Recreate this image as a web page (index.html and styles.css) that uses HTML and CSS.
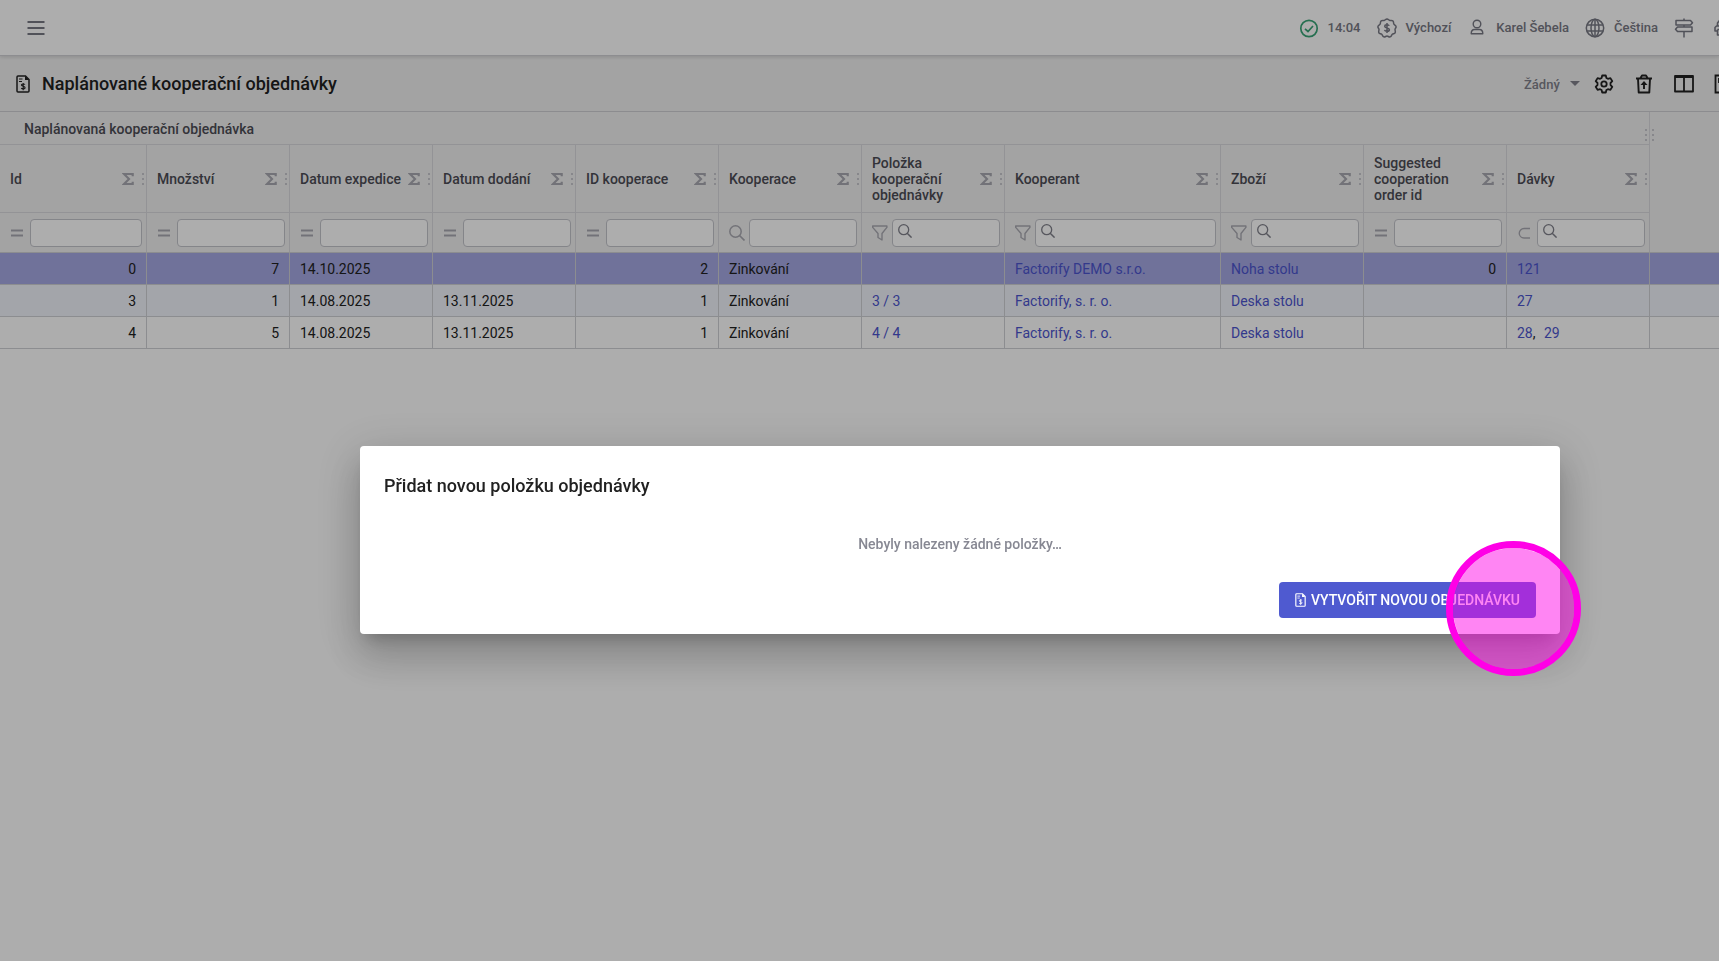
FILE: index.html
```html
<!DOCTYPE html>
<html lang="cs">
<head>
    <meta charset="UTF-8">
    <meta name="viewport" content="width=device-width, initial-scale=1.0">
    <title>Naplánované kooperační objednávky</title>
    <link rel="stylesheet" href="styles.css">
</head>
<body>

    <!-- Ikony -->
    <svg class="sprite" aria-hidden="true">
        <symbol id="i-sigma" viewBox="0 0 12 14"><path d="M10.700 4.200V2H2L7 7l-5 5h8.700V9.800" fill="none" stroke="currentColor" stroke-width="2.200"/></symbol>
        <symbol id="i-dots" viewBox="0 0 2 12"><path d="M0 0h2v2H0zM0 5h2v2H0zM0 10h2v2H0z" fill="currentColor"/></symbol>
        <symbol id="i-equal" viewBox="0 0 16 16"><path d="M1 5.500h12M1 10.500h12" fill="none" stroke="currentColor" stroke-width="2"/></symbol>
        <symbol id="i-search" viewBox="0 0 16 16"><circle cx="6.500" cy="6.500" r="5.700" fill="none" stroke="currentColor" stroke-width="1.500"/><path d="M10.500 10.500l5 5" stroke="currentColor" stroke-width="1.700"/></symbol>
        <symbol id="i-funnel" viewBox="0 0 16 16"><path d="M.7 1h14.200v1.400L10 8.500V15l-4-2.500v-4L.7 2.400z" fill="none" stroke="currentColor" stroke-width="1.400" stroke-linejoin="round"/></symbol>
        <symbol id="i-subset" viewBox="0 0 16 16"><path d="M13 3.500H7a4.700 4.700 0 0 0 0 9.500h6" fill="none" stroke="currentColor" stroke-width="1.400"/></symbol>
        <symbol id="i-order" viewBox="0 0 14 18"><path d="M2 1h7.500L13 4.500V16a1 1 0 0 1-1 1H2a1 1 0 0 1-1-1V2a1 1 0 0 1 1-1z" fill="none" stroke="currentColor" stroke-width="1.500"/><path d="M9 1v4h4z" fill="currentColor"/><path d="M3 4h3.500M3 6.500h3M9 9.500c-.5-.7-3.600-.9-3.600.6 0 1.600 3.700.8 3.700 2.600 0 1.500-3.100 1.400-3.900.5M7.200 8v7.200" fill="none" stroke="currentColor" stroke-width="1.100"/></symbol>
    </svg>

    <div class="app">
        <!-- Horní lišta -->
        <header class="topbar">
            <button class="icon-button" aria-label="Menu">
                <svg width="18" height="16" viewBox="0 0 18 16"><path d="M.5 2h17M.5 8h17M.5 14h17" stroke="currentColor" stroke-width="2"/></svg>
            </button>
            <div class="status">
                <span class="status-item">
                    <svg class="ok" width="20" height="20" viewBox="0 0 20 20"><g fill="none" stroke="currentColor" stroke-width="1.700"><circle cx="10" cy="10.500" r="8.200"/><path d="M6 10.800l3 2.700 5-5.500"/></g></svg>
                    14:04
                </span>
                <span class="status-item">
                    <svg width="20" height="20" viewBox="0 0 20 20"><g fill="none" stroke="currentColor" stroke-width="1.500"><path d="M10 1c1.400 0 1.700 1.300 2.800 1.500s2.300-.4 3.200.6.300 2.100.9 3.100 2.100 1.200 2.200 2.500-1.100 1.700-1.100 2.800.8 2.200.1 3.300-2 .7-2.800 1.500-.8 2.200-2.100 2.600S11.100 18 10 18s-2 1.300-3.200.9-1.300-1.800-2.100-2.600-2.200-.4-2.800-1.500.1-2.200.1-3.300S.8 10 .9 8.700s1.600-1.500 2.200-2.500 0-2.100.9-3.100 2.100-.4 3.200-.6S8.600 1 10 1z"/><path d="M12.200 7.800c-.6-1.500-4.500-1.500-4.500.4 0 2.300 4.700 1.100 4.700 3.500 0 2.100-4.400 2-4.900.2M10 5v10"/></g></svg>
                    Výchozí
                </span>
                <span class="status-item">
                    <svg width="20" height="20" viewBox="0 0 20 20"><g fill="none" stroke="currentColor" stroke-width="1.400"><circle cx="10" cy="6" r="3.800"/><path d="M4.200 15.800c0-3 1.300-4.300 3.300-4.300h5c2 0 3.300 1.300 3.300 4.300z" stroke-linejoin="round"/></g></svg>
                    Karel Šebela
                </span>
                <span class="status-item">
                    <svg width="20" height="20" viewBox="0 0 20 20"><g fill="none" stroke="currentColor" stroke-width="1.500"><circle cx="10" cy="10" r="8.700"/><ellipse cx="10" cy="10" rx="4" ry="8.700"/><path d="M10 1.300v17.400M2 7h16M2 13h16"/></g></svg>
                    Čeština
                </span>
                <svg width="20" height="20" viewBox="0 0 20 20"><g fill="none" stroke="currentColor" stroke-width="1.500" stroke-linejoin="round"><path d="M10 .5v2M10 7v2M10 13.500v6M2 2.500h14.500l2 2.200-2 2.300H2zM18 9H3.500l-2 2.200 2 2.300H18z"/></g></svg>
                <svg width="20" height="20" viewBox="0 0 20 20"><g fill="none" stroke="currentColor" stroke-width="1.600" stroke-linejoin="round"><path d="M7.500 8V5l2-2.500H18M7.500 13H5V9.500L6.500 8H20M7.500 11.500H20M7.500 11.500V17H20"/></g></svg>
            </div>
        </header>

        <!-- Nadpis stránky a nástroje -->
        <div class="toolbar">
            <svg width="14" height="18"><use href="#i-order"/></svg>
            <h1>Naplánované kooperační objednávky</h1>
            <div class="view-select">
                <select aria-label="Pohled"><option>Žádný</option></select>
                <svg width="10" height="5" viewBox="0 0 10 5"><path d="M0 0h10L5 5z" fill="currentColor"/></svg>
            </div>
            <div class="tools">
                <button class="icon-button" aria-label="Nastavení">
                    <svg width="20" height="20" viewBox="0 0 20 20"><g fill="none" stroke="currentColor" stroke-width="1.800" stroke-linejoin="round"><path d="M8.200 1.500h3.600l.6 2.500 1.500.8 2.500-.7 1.900 3.100L16.500 9v2l1.800 1.800-1.900 3.100-2.500-.7-1.500.8-.6 2.500H8.200L7.600 16l-1.500-.8-2.500.7-1.900-3.100L3.500 11V9L1.700 7.200l1.900-3.100 2.500.7L7.600 4z"/><circle cx="10" cy="10" r="2.700"/></g></svg>
                </button>
                <button class="icon-button" aria-label="Obnovit smazané">
                    <svg width="20" height="20" viewBox="0 0 20 20"><g fill="none" stroke="currentColor" stroke-width="1.900" stroke-linejoin="round"><path d="M2 4.500h16M6.500 4l1.500-2.500h4L13.500 4M4 4.500l.7 14h10.600l.7-14M10 15V9"/></g><path d="M6.500 11L10 7l3.500 4z" fill="currentColor"/></svg>
                </button>
                <button class="icon-button" aria-label="Sloupce">
                    <svg width="20" height="20" viewBox="0 0 20 20"><path d="M1 2h18v15.500H1zM10 2v15.500M1 3h18" fill="none" stroke="currentColor" stroke-width="1.800" stroke-linejoin="round"/></svg>
                </button>
                <button class="icon-button" aria-label="Export">
                    <svg width="20" height="20" viewBox="0 0 20 20"><path d="M1.500 1.500h17v17h-17zM5 4v4h8V4" fill="none" stroke="currentColor" stroke-width="1.800"/></svg>
                </button>
            </div>
        </div>

        <!-- Tabulka objednávek -->
        <table class="grid">
            <colgroup>
                <col class="col-id">
                <col class="col" span="6">
                <col class="col-wide">
                <col class="col" span="3">
                <col>
            </colgroup>
            <thead>
                <tr class="group-row">
                    <th colspan="11">
                        Naplánovaná kooperační objednávka
                        <span class="group-handle"><svg width="2" height="12"><use href="#i-dots"/></svg><svg width="2" height="12"><use href="#i-dots"/></svg></span>
                    </th>
                    <td class="filler" rowspan="3"></td>
                </tr>
                <tr class="head-row">
                    <th><div class="head"><span>Id</span><svg width="12" height="14"><use href="#i-sigma"/></svg><svg class="handle" width="2" height="12"><use href="#i-dots"/></svg></div></th>
                    <th><div class="head"><span>Množství</span><svg width="12" height="14"><use href="#i-sigma"/></svg><svg class="handle" width="2" height="12"><use href="#i-dots"/></svg></div></th>
                    <th><div class="head"><span>Datum expedice</span><svg width="12" height="14"><use href="#i-sigma"/></svg><svg class="handle" width="2" height="12"><use href="#i-dots"/></svg></div></th>
                    <th><div class="head"><span>Datum dodání</span><svg width="12" height="14"><use href="#i-sigma"/></svg><svg class="handle" width="2" height="12"><use href="#i-dots"/></svg></div></th>
                    <th><div class="head"><span>ID kooperace</span><svg width="12" height="14"><use href="#i-sigma"/></svg><svg class="handle" width="2" height="12"><use href="#i-dots"/></svg></div></th>
                    <th><div class="head"><span>Kooperace</span><svg width="12" height="14"><use href="#i-sigma"/></svg><svg class="handle" width="2" height="12"><use href="#i-dots"/></svg></div></th>
                    <th><div class="head"><span>Položka kooperační objednávky</span><svg width="12" height="14"><use href="#i-sigma"/></svg><svg class="handle" width="2" height="12"><use href="#i-dots"/></svg></div></th>
                    <th><div class="head"><span>Kooperant</span><svg width="12" height="14"><use href="#i-sigma"/></svg><svg class="handle" width="2" height="12"><use href="#i-dots"/></svg></div></th>
                    <th><div class="head"><span>Zboží</span><svg width="12" height="14"><use href="#i-sigma"/></svg><svg class="handle" width="2" height="12"><use href="#i-dots"/></svg></div></th>
                    <th><div class="head"><span>Suggested cooperation order id</span><svg width="12" height="14"><use href="#i-sigma"/></svg><svg class="handle" width="2" height="12"><use href="#i-dots"/></svg></div></th>
                    <th><div class="head"><span>Dávky</span><svg width="12" height="14"><use href="#i-sigma"/></svg><svg class="handle" width="2" height="12"><use href="#i-dots"/></svg></div></th>
                </tr>
                <tr class="filter-row">
                    <td><div class="filter"><svg width="16" height="16"><use href="#i-equal"/></svg><input type="text" aria-label="Id"></div></td>
                    <td><div class="filter"><svg width="16" height="16"><use href="#i-equal"/></svg><input type="text" aria-label="Množství"></div></td>
                    <td><div class="filter"><svg width="16" height="16"><use href="#i-equal"/></svg><input type="text" aria-label="Datum expedice"></div></td>
                    <td><div class="filter"><svg width="16" height="16"><use href="#i-equal"/></svg><input type="text" aria-label="Datum dodání"></div></td>
                    <td><div class="filter"><svg width="16" height="16"><use href="#i-equal"/></svg><input type="text" aria-label="ID kooperace"></div></td>
                    <td><div class="filter"><svg width="16" height="16"><use href="#i-search"/></svg><input type="text" aria-label="Kooperace"></div></td>
                    <td><div class="filter"><svg width="16" height="16"><use href="#i-funnel"/></svg><input type="text" aria-label="Položka kooperační objednávky"><svg class="lens" width="14" height="14"><use href="#i-search"/></svg></div></td>
                    <td><div class="filter"><svg width="16" height="16"><use href="#i-funnel"/></svg><input type="text" aria-label="Kooperant"><svg class="lens" width="14" height="14"><use href="#i-search"/></svg></div></td>
                    <td><div class="filter"><svg width="16" height="16"><use href="#i-funnel"/></svg><input type="text" aria-label="Zboží"><svg class="lens" width="14" height="14"><use href="#i-search"/></svg></div></td>
                    <td><div class="filter"><svg width="16" height="16"><use href="#i-equal"/></svg><input type="text" aria-label="Suggested cooperation order id"></div></td>
                    <td><div class="filter"><svg width="16" height="16"><use href="#i-subset"/></svg><input type="text" aria-label="Dávky"><svg class="lens" width="14" height="14"><use href="#i-search"/></svg></div></td>
                </tr>
            </thead>
            <tbody>
                <tr class="selected">
                    <td class="number">0</td>
                    <td class="number">7</td>
                    <td>14.10.2025</td>
                    <td></td>
                    <td class="number">2</td>
                    <td>Zinkování</td>
                    <td></td>
                    <td><a href="#">Factorify DEMO s.r.o.</a></td>
                    <td><a href="#">Noha stolu</a></td>
                    <td class="number">0</td>
                    <td><a href="#">121</a></td>
                    <td></td>
                </tr>
                <tr class="odd">
                    <td class="number">3</td>
                    <td class="number">1</td>
                    <td>14.08.2025</td>
                    <td>13.11.2025</td>
                    <td class="number">1</td>
                    <td>Zinkování</td>
                    <td><a href="#">3 / 3</a></td>
                    <td><a href="#">Factorify, s. r. o.</a></td>
                    <td><a href="#">Deska stolu</a></td>
                    <td></td>
                    <td><a href="#">27</a></td>
                    <td></td>
                </tr>
                <tr>
                    <td class="number">4</td>
                    <td class="number">5</td>
                    <td>14.08.2025</td>
                    <td>13.11.2025</td>
                    <td class="number">1</td>
                    <td>Zinkování</td>
                    <td><a href="#">4 / 4</a></td>
                    <td><a href="#">Factorify, s. r. o.</a></td>
                    <td><a href="#">Deska stolu</a></td>
                    <td></td>
                    <td class="links"><a href="#">28</a>, <a href="#">29</a></td>
                    <td></td>
                </tr>
            </tbody>
        </table>
    </div>

    <!-- Dialog -->
    <div class="backdrop">
        <div class="dialog" role="dialog" aria-labelledby="dialogTitle">
            <h2 id="dialogTitle">Přidat novou položku objednávky</h2>
            <p>Nebyly nalezeny žádné položky…</p>
            <div class="dialog-actions">
                <button class="primary"><svg width="11" height="14" viewBox="0 0 14 18"><use href="#i-order"/></svg>Vytvořit novou objednávku</button>
            </div>
            <div class="click-marker"></div>
        </div>
    </div>

</body>
</html>
```
FILE: styles.css
```css
* {
    box-sizing: border-box;
}
body {
    font-family: Roboto, "Liberation Sans", sans-serif;
    font-size: 14px;
    line-height: 16px;
    color: #212121;
    background-color: #fff;
    margin: 0;
    overflow: hidden;
}
svg {
    display: block;
    flex-shrink: 0;
}
.sprite {
    position: absolute;
    width: 0;
    height: 0;
}
.app {
    min-height: 100vh;
    overflow: hidden;
}
.icon-button {
    display: flex;
    align-items: center;
    justify-content: center;
    width: 40px;
    height: 40px;
    padding: 0;
    border: none;
    background: none;
    color: inherit;
    cursor: pointer;
}

/* Horní lišta */
.topbar {
    position: relative;
    display: flex;
    align-items: center;
    justify-content: space-between;
    height: 56px;
    padding-left: 16px;
    color: #787984;
    border-bottom: 1px solid #d0d0d4;
    box-shadow: 0 1px 4px rgba(0, 0, 0, 0.15);
}
.status {
    display: flex;
    align-items: center;
    gap: 16px;
    margin-right: -11px;
    font-size: 13px;
    font-weight: 500;
}
.status-item {
    display: flex;
    align-items: center;
    gap: 9px;
}
.ok {
    color: #38a477;
}

/* Nadpis */
.toolbar {
    display: flex;
    align-items: center;
    height: 56px;
    padding-left: 16px;
    background-color: #f1f1f1;
    border-bottom: 1px solid #cfcfd3;
}
.toolbar h1 {
    flex: 1;
    margin: 0 0 0 12px;
    font-size: 18px;
    line-height: 24px;
    font-weight: 500;
}
.view-select {
    display: flex;
    align-items: center;
    gap: 10px;
    margin-right: 4px;
    color: #80818b;
}
.view-select select {
    appearance: none;
    padding: 2px 0 0;
    border: none;
    background: none;
    font: inherit;
    font-size: 13px;
    font-weight: 500;
    color: inherit;
}
.tools {
    display: flex;
    margin-right: -25px;
}

/* Tabulka */
.grid {
    width: 100%;
    table-layout: fixed;
    border-collapse: separate;
    border-spacing: 0;
}
.col-id {
    width: 147px;
}
.col {
    width: 143px;
}
.col-wide {
    width: 216px;
}
.grid th,
.grid td {
    padding: 0 10px;
    text-align: left;
    border-right: 1px solid #cfd0d4;
    border-bottom: 1px solid #cfd0d4;
}
.grid thead {
    background-color: #f1f1f1;
    color: #4c4c55;
}
.grid thead th,
.grid .filter-row td {
    border-right-color: #d9d9dd;
}
.grid thead th {
    font-weight: 500;
    border-bottom-color: #d9d9dd;
}
.group-row {
    height: 33px;
}
.grid .group-row th {
    position: relative;
    padding: 2px 0 0 24px;
}
.group-handle {
    position: absolute;
    right: -5px;
    bottom: 3px;
    display: flex;
    gap: 5px;
    color: #c8c8cd;
}
.grid .filler {
    border-right: none;
}
.head-row {
    height: 68px;
}
.grid .head-row th {
    padding: 0 2px 0 10px;
}
.head {
    display: flex;
    align-items: center;
}
.head span {
    flex: 1;
}
.head svg {
    color: #a9a9b1;
}
.head .handle {
    margin-left: 8px;
    color: #c8c8cd;
}
.filter-row {
    height: 40px;
}
.grid .filter-row td {
    padding-right: 4px;
}
.filter {
    position: relative;
    display: flex;
    align-items: center;
    gap: 4px;
    color: #a9a9b1;
}
.filter input {
    flex: 1;
    min-width: 0;
    height: 28px;
    border: 1px solid #c3c4ca;
    border-radius: 4px;
    background-color: #fff;
}
.lens {
    position: absolute;
    left: 26px;
    top: 5px;
    color: #80818b;
}
.grid tbody tr {
    height: 32px;
}
.grid tbody td:last-child {
    border-right: none;
}
.grid .number {
    text-align: right;
}
.grid a {
    color: #4c55ce;
    text-decoration: none;
}
.links a + a {
    margin-left: 5px;
}
.odd {
    background-color: #f1f4fb;
}
.selected {
    background-color: #a5a8e4;
}

/* Dialog */
.backdrop {
    position: fixed;
    inset: 0 -201px -119px 0;
    display: flex;
    align-items: center;
    justify-content: center;
    background-color: rgba(0, 0, 0, 0.32);
}
.dialog {
    position: relative;
    width: 100%;
    max-width: 1200px;
    padding: 28px 24px 16px;
    border-radius: 4px;
    background-color: #fff;
    box-shadow: 0 11px 15px -7px rgba(0, 0, 0, 0.2), 0 24px 38px 3px rgba(0, 0, 0, 0.14), 0 9px 46px 8px rgba(0, 0, 0, 0.12);
}
.dialog h2 {
    margin: 0;
    font-size: 18px;
    line-height: 24px;
    font-weight: 500;
}
.dialog p {
    margin: 36px 0 28px;
    line-height: 20px;
    font-weight: 500;
    text-align: center;
    color: #878893;
}
.dialog-actions {
    display: flex;
    justify-content: flex-end;
}
.primary {
    display: flex;
    align-items: center;
    gap: 5px;
    height: 36px;
    padding: 0 16px;
    border: none;
    border-radius: 4px;
    background-color: #4f5ad0;
    color: #fff;
    font: inherit;
    font-weight: 500;
    text-transform: uppercase;
    cursor: pointer;
}
.click-marker {
    position: absolute;
    right: -21px;
    bottom: -42px;
    width: 135px;
    height: 135px;
    border: 7px solid #ff00e6;
    border-radius: 50%;
    background-color: rgba(255, 0, 230, 0.48);
    background-clip: padding-box;
    pointer-events: none;
}
```
